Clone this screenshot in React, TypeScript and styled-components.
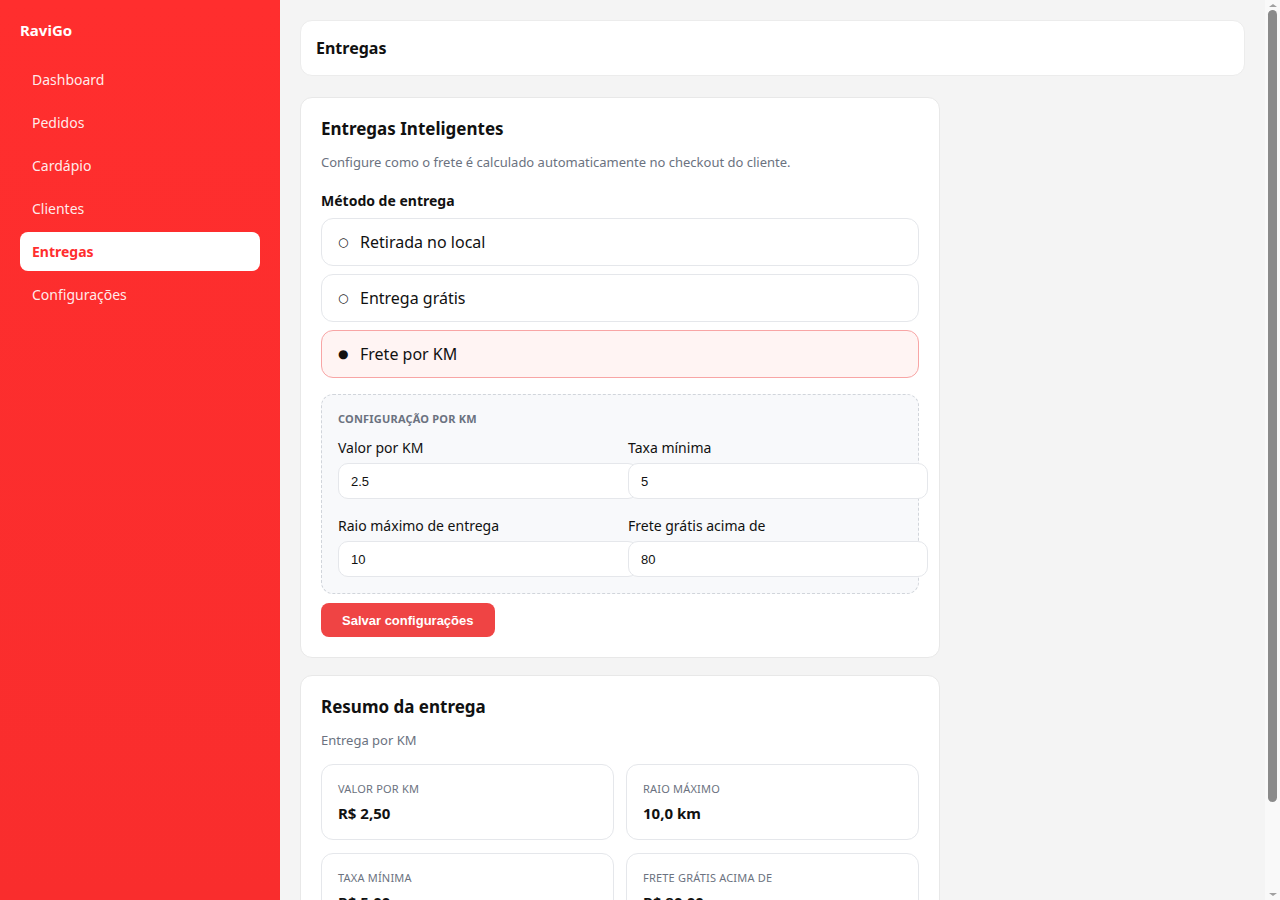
import { ReactElement } from "react";
import styled, { createGlobalStyle } from "styled-components";

const GlobalStyle = createGlobalStyle`
  * {
    box-sizing: border-box;
  }

  body {
    margin: 0;
    font-family: "Noto Sans", "Open Sans", sans-serif;
    background-color: #f4f4f4;
    color: #111;
  }
`;

const Layout = styled.div`
  display: flex;
  height: 100vh;
`;

const Sidebar = styled.aside`
  width: 280px;
  flex-shrink: 0;
  padding: 20px;
  background: linear-gradient(180deg, #ff2e2e 0%, #f92d2d 100%);
  color: #fff;
`;

const Brand = styled.div`
  font-size: 15px;
  line-height: 20px;
  font-weight: 700;
  margin-bottom: 20px;
`;

const Nav = styled.nav`
  display: flex;
  flex-direction: column;
  gap: 4px;
`;

const NavItem = styled.a<{ active?: boolean }>`
  display: block;
  padding: 10px 12px;
  font-size: 14px;
  line-height: 19px;
  border-radius: 8px;
  text-decoration: none;
  cursor: pointer;
  font-weight: ${({ active }) => (active ? 700 : 400)};
  color: ${({ active }) => (active ? "#ff2e2e" : "rgba(255, 255, 255, 0.92)")};
  background-color: ${({ active }) => (active ? "#fff" : "transparent")};
`;

const Main = styled.main`
  flex: 1;
  min-width: 0;
  padding: 20px;
  overflow-y: auto;
  scrollbar-width: none;
`;

// the page scrollbar as it shows in the screenshot
const ScrollTrack = styled.div`
  width: 15px;
  flex-shrink: 0;
  display: flex;
  flex-direction: column;
  align-items: center;
  padding: 4px 0;
  background-color: #f9f9f9;
`;

const Arrow = styled.span<{ down?: boolean }>`
  width: 0;
  height: 0;
  border-left: 4.5px solid transparent;
  border-right: 4.5px solid transparent;
  ${({ down }) =>
    down
      ? "border-top: 3px solid #a0a0a0; margin-top: auto;"
      : "border-bottom: 3px solid #a0a0a0;"}
`;

const Thumb = styled.span`
  width: 9px;
  height: 792px;
  margin-top: 3px;
  border-radius: 5px;
  background-color: #8a8a8a;
`;

const Header = styled.header`
  background-color: #fff;
  border: 1px solid #ececec;
  border-radius: 12px;
  padding: 16px 15px;
  margin-bottom: 21px;
`;

const HeaderTitle = styled.h1`
  margin: 0;
  font-size: 16px;
  line-height: 22px;
  font-weight: 700;
`;

const Card = styled.section`
  width: 640px;
  background-color: #fff;
  border: 1px solid #e8e8e8;
  border-radius: 12px;
  padding: 20px;
  margin-bottom: 17px;
`;

const CardTitle = styled.h2`
  margin: 0 0 13px;
  font-size: 17px;
  line-height: 22px;
  font-weight: 700;
`;

const Muted = styled.p<{ gap?: number }>`
  margin: 0 0 ${({ gap }) => gap ?? 20}px;
  font-size: 13px;
  line-height: 18px;
  color: #6b7280;
`;

const SectionLabel = styled.div`
  font-size: 14px;
  line-height: 19px;
  font-weight: 700;
  margin-bottom: 8px;
`;

const Options = styled.div`
  display: flex;
  flex-direction: column;
  gap: 8px;
  margin-bottom: 16px;
`;

const Option = styled.label<{ selected?: boolean }>`
  display: flex;
  align-items: center;
  padding: 12px 16px;
  font-size: 16px;
  line-height: 22px;
  border-radius: 12px;
  cursor: pointer;
  border: 1px solid ${({ selected }) => (selected ? "#f8a5a5" : "#e5e7eb")};
  background-color: ${({ selected }) => (selected ? "#fff4f3" : "#fff")};
`;

const Radio = styled.span`
  width: 10px;
  margin-right: 12px;
  font-family: "DejaVu Sans", sans-serif;
  font-size: 12px;
`;

const KmBox = styled.div`
  border: 1px dashed #d1d5db;
  border-radius: 12px;
  background-color: #f8f9fb;
  padding: 16px;
`;

const KmTitle = styled.div`
  font-size: 11px;
  line-height: 15px;
  font-weight: 700;
  text-transform: uppercase;
  letter-spacing: 0.2px;
  color: #6b7280;
  margin-bottom: 12px;
`;

const FieldGrid = styled.div`
  display: grid;
  grid-template-columns: 1fr 1fr;
  gap: 17px 16px;
`;

const Field = styled.label`
  display: flex;
  flex-direction: column;
  min-width: 0;
`;

const FieldLabel = styled.span`
  font-size: 14px;
  line-height: 19px;
  margin-bottom: 6px;
`;

const Input = styled.input`
  box-sizing: content-box;
  width: 100%;
  padding: 9px 12px;
  height: 16px;
  font-family: "Liberation Sans", Arial, sans-serif;
  font-size: 13px;
  color: #111;
  background-color: #fff;
  border: 1px solid #e5e7eb;
  border-radius: 10px;
  outline: none;
`;

const SaveButton = styled.button`
  margin-top: 9px;
  height: 34px;
  padding: 0 21px;
  border: none;
  border-radius: 8px;
  background-color: #ef4444;
  color: #fff;
  font-family: "Liberation Sans", Arial, sans-serif;
  font-size: 13px;
  font-weight: 700;
  cursor: pointer;
`;

const StatGrid = styled.div`
  display: grid;
  grid-template-columns: 1fr 1fr;
  gap: 13px 12px;
`;

const Stat = styled.div`
  border: 1px solid #e5e7eb;
  border-radius: 12px;
  padding: 16px;
`;

const StatLabel = styled.div`
  font-size: 11px;
  line-height: 15px;
  text-transform: uppercase;
  letter-spacing: 0.2px;
  color: #6b7280;
  margin-bottom: 7px;
`;

const StatValue = styled.div`
  font-size: 15px;
  line-height: 20px;
  font-weight: 700;
`;

const navItems = [
  "Dashboard",
  "Pedidos",
  "Cardápio",
  "Clientes",
  "Entregas",
  "Configurações",
];

const methods = [
  { label: "Retirada no local", selected: false },
  { label: "Entrega grátis", selected: false },
  { label: "Frete por KM", selected: true },
];

const fields = [
  { label: "Valor por KM", value: "2.5" },
  { label: "Taxa mínima", value: "5" },
  { label: "Raio máximo de entrega", value: "10" },
  { label: "Frete grátis acima de", value: "80" },
];

const stats = [
  { label: "Valor por KM", value: "R$ 2,50" },
  { label: "Raio máximo", value: "10,0 km" },
  { label: "Taxa mínima", value: "R$ 5,00" },
  { label: "Frete grátis acima de", value: "R$ 80,00" },
];

const App = (): ReactElement => {
  return (
    <>
      <GlobalStyle />
      <Layout>
        <Sidebar>
          <Brand>RaviGo</Brand>
          <Nav>
            {navItems.map((item) => (
              <NavItem key={item} active={item === "Entregas"}>
                {item}
              </NavItem>
            ))}
          </Nav>
        </Sidebar>
        <Main>
          <Header>
            <HeaderTitle>Entregas</HeaderTitle>
          </Header>

          <Card>
            <CardTitle>Entregas Inteligentes</CardTitle>
            <Muted>
              Configure como o frete é calculado automaticamente no checkout do
              cliente.
            </Muted>
            <SectionLabel>Método de entrega</SectionLabel>
            <Options>
              {methods.map((m) => (
                <Option key={m.label} selected={m.selected}>
                  <Radio>{m.selected ? "●" : "○"}</Radio>
                  {m.label}
                </Option>
              ))}
            </Options>
            <KmBox>
              <KmTitle>Configuração por KM</KmTitle>
              <FieldGrid>
                {fields.map((f) => (
                  <Field key={f.label}>
                    <FieldLabel>{f.label}</FieldLabel>
                    <Input type="text" defaultValue={f.value} />
                  </Field>
                ))}
              </FieldGrid>
            </KmBox>
            <SaveButton>Salvar configurações</SaveButton>
          </Card>

          <Card>
            <CardTitle>Resumo da entrega</CardTitle>
            <Muted gap={15}>Entrega por KM</Muted>
            <StatGrid>
              {stats.map((s) => (
                <Stat key={s.label}>
                  <StatLabel>{s.label}</StatLabel>
                  <StatValue>{s.value}</StatValue>
                </Stat>
              ))}
            </StatGrid>
          </Card>
        </Main>
        <ScrollTrack>
          <Arrow />
          <Thumb />
          <Arrow down />
        </ScrollTrack>
      </Layout>
    </>
  );
};

export default App;
